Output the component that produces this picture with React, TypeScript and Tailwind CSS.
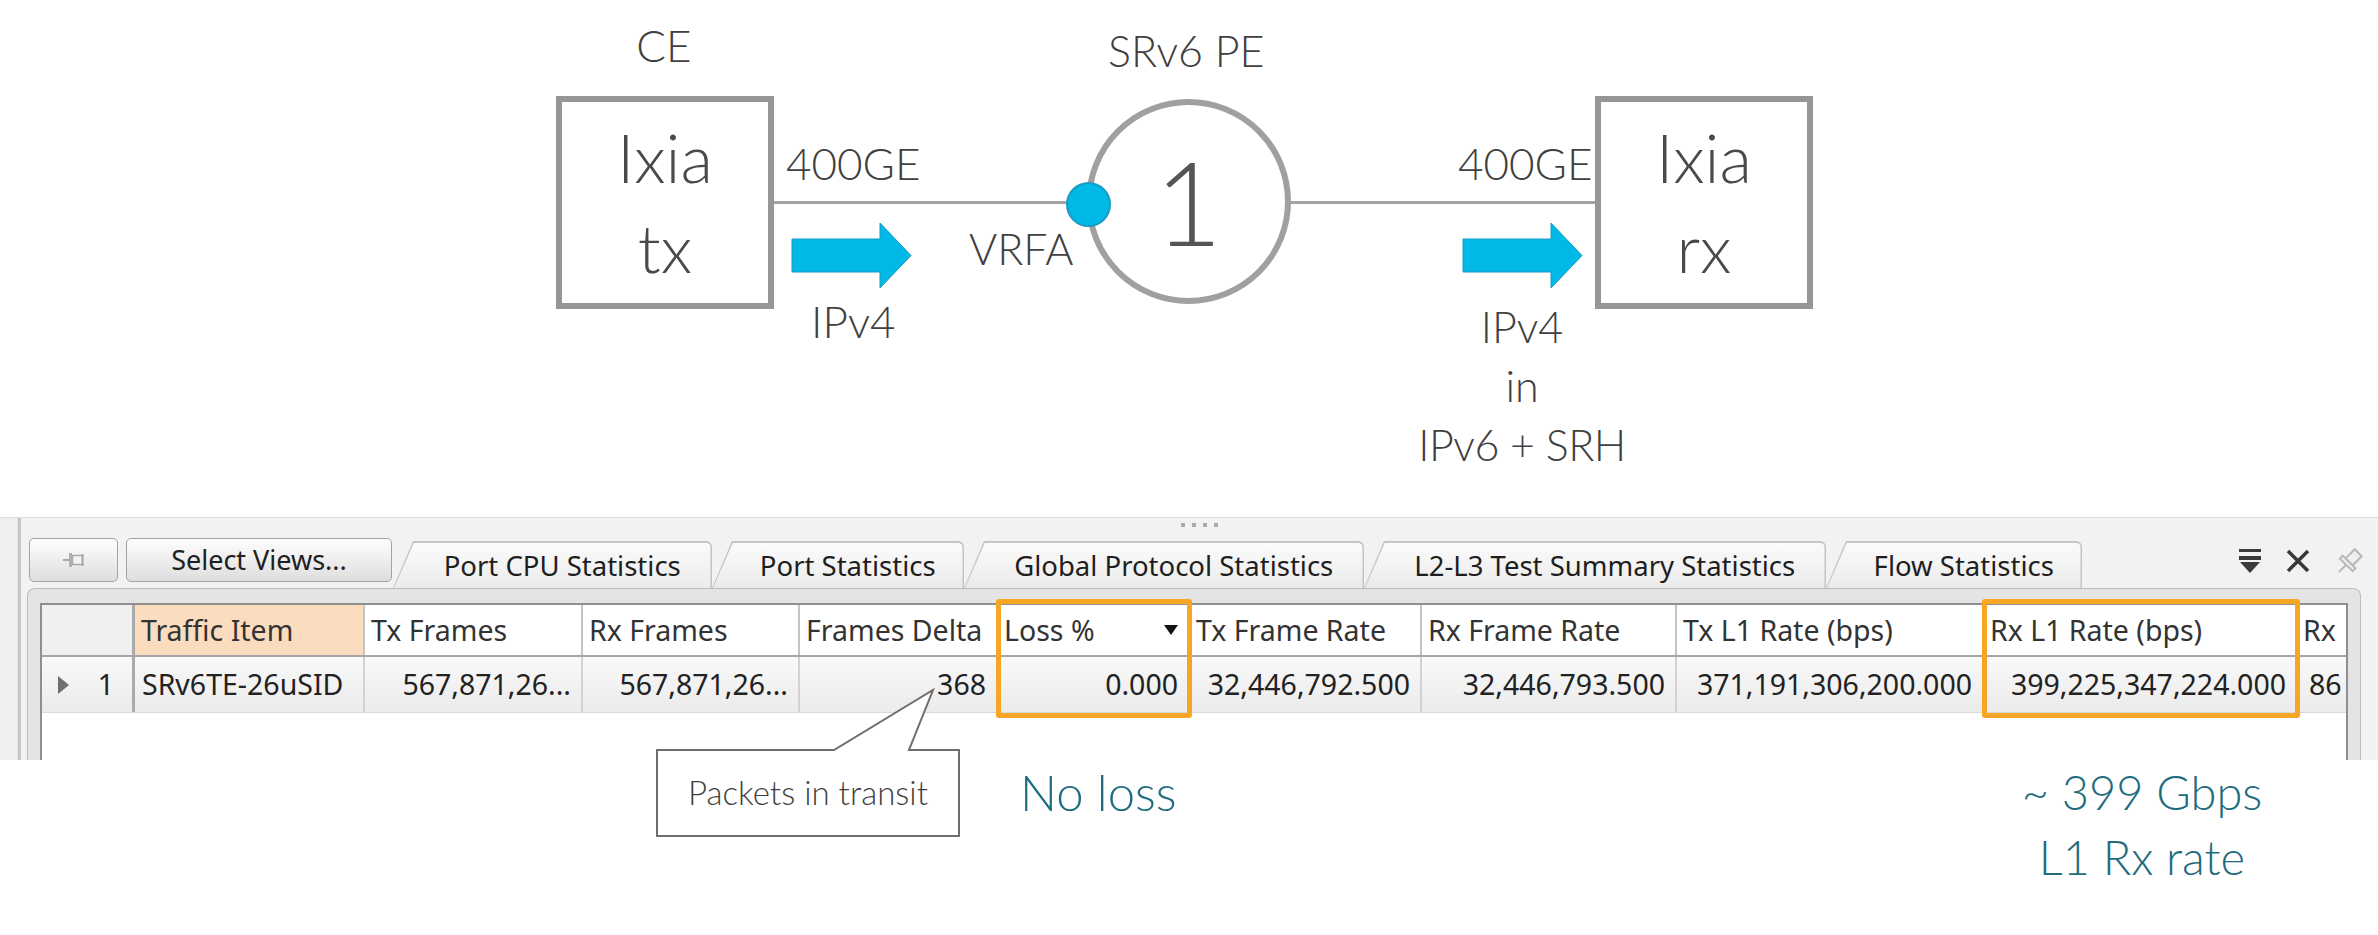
import React from "react";

const lato = "font-['Lato',sans-serif] font-light";
const ui = "font-['Noto_Sans',sans-serif]";

type Col = { label: string; value: string; w: string; left?: boolean; hl?: boolean; sort?: boolean };

const columns: Col[] = [
  { label: "Traffic Item", value: "SRv6TE-26uSID", w: "w-[230px]", left: true, hl: true },
  { label: "Tx Frames", value: "567,871,26...", w: "w-[218px]" },
  { label: "Rx Frames", value: "567,871,26...", w: "w-[217px]" },
  { label: "Frames Delta", value: "368", w: "w-[198px]" },
  { label: "Loss %", value: "0.000", w: "w-[192px]", sort: true },
  { label: "Tx Frame Rate", value: "32,446,792.500", w: "w-[232px]" },
  { label: "Rx Frame Rate", value: "32,446,793.500", w: "w-[255px]" },
  { label: "Tx L1 Rate (bps)", value: "371,191,306,200.000", w: "w-[307px]" },
  { label: "Rx L1 Rate (bps)", value: "399,225,347,224.000", w: "w-[314px]" },
];

const tabs = [
  { label: "Port CPU Statistics", w: "w-[319px]" },
  { label: "Port Statistics", w: "w-[252px]" },
  { label: "Global Protocol Statistics", w: "w-[400px]" },
  { label: "L2-L3 Test Summary Statistics", w: "w-[462px]" },
  { label: "Flow Statistics", w: "w-[256px]" },
];

function Arrow({ className }: { className: string }) {
  return (
    <svg className={className} width="121" height="67" viewBox="-1 -1 121 67">
      <polygon points="0,16 88,16 88,0 119,32.5 88,65 88,49 0,49" fill="#00b9e6" stroke="#1a9bc4" strokeWidth="1" />
    </svg>
  );
}

function Diagram() {
  const label = `absolute whitespace-nowrap leading-none text-[#404040] ${lato}`;
  return (
    <div className="relative h-[517px]">
      <div className={`${label} left-[614px] top-[23px] w-[100px] text-center text-[44px]`}>CE</div>
      <div className={`${label} left-[1108px] top-[29px] text-[43px]`}>SRv6 PE</div>

      <div className={`absolute left-[556px] top-[96px] flex h-[213px] w-[218px] flex-col items-center border-[6px] border-[#969696] pt-[10px] text-[67px] leading-[90px] text-[#4a4a4a] ${lato}`}>
        <span>Ixia</span>
        <span>tx</span>
      </div>
      <div className={`absolute left-[1595px] top-[96px] flex h-[213px] w-[218px] flex-col items-center border-[6px] border-[#969696] pt-[10px] text-[67px] leading-[90px] text-[#4a4a4a] ${lato}`}>
        <span>Ixia</span>
        <span>rx</span>
      </div>

      <div className="absolute left-[774px] top-[201px] h-[3px] w-[312px] bg-[#a3a3a3]" />
      <div className="absolute left-[1290px] top-[201px] h-[3px] w-[305px] bg-[#a3a3a3]" />

      <div className={`absolute left-[1086px] top-[99px] flex h-[205px] w-[205px] items-center justify-center rounded-full border-[6px] border-[#a0a0a0] text-[117px] leading-none text-[#555] ${lato}`}>
        1
      </div>
      <div className="absolute left-[1066px] top-[182px] h-[45px] w-[45px] rounded-full border-2 border-[#1a9bc4] bg-[#00b9e6]" />

      <div className={`${label} left-[786px] top-[141px] text-[44px]`}>400GE</div>
      <div className={`${label} left-[1458px] top-[141px] text-[44px]`}>400GE</div>
      <div className={`${label} left-[969px] top-[227px] text-[43px]`}>VRFA</div>
      <div className={`${label} left-[811px] top-[299px] text-[44px]`}>IPv4</div>
      <div className={`absolute left-[1422px] top-[297px] flex w-[200px] flex-col items-center whitespace-nowrap text-[43px] leading-[59px] text-[#404040] ${lato}`}>
        <span>IPv4</span>
        <span>in</span>
        <span className="tracking-[-0.5px]">IPv6 + SRH</span>
      </div>

      <Arrow className="absolute left-[791px] top-[222px]" />
      <Arrow className="absolute left-[1462px] top-[222px]" />
    </div>
  );
}

function Tab({ label, w }: { label: string; w: string }) {
  return (
    <div className={`${w} h-[47px] shrink-0 rounded-tr-[6px] bg-[#c4c4c4] pl-[1px] pr-[1.5px] pt-[1.5px] [clip-path:polygon(0_100%,20px_0,100%_0,100%_100%)]`}>
      <div className="flex h-full items-center justify-center rounded-tr-[5px] bg-linear-to-b from-[#fbfbfb] to-[#ebebeb] pl-[24px] pr-[4px] text-[27.5px] text-[#1e1e1e] [clip-path:polygon(0_100%,20px_0,100%_0,100%_100%)]">
        {label}
      </div>
    </div>
  );
}

function StatsPanel() {
  return (
    <section className={`flex h-[243px] border-t border-[#dcdcdc] ${ui}`}>
      <div className="w-[17px] bg-[#efefef]" />
      <div className="w-[1px] bg-[#e2e2e2]" />
      <div className="w-[3px] bg-[#c6c6c6]" />
      <div className="flex min-w-0 flex-1 flex-col bg-[#f2f2f2]">
        <div className="flex h-[20px] justify-center gap-[7px] pt-[5px]">
          <span className="h-[4px] w-[4px] bg-[#ababab]" />
          <span className="h-[4px] w-[4px] bg-[#ababab]" />
          <span className="h-[4px] w-[4px] bg-[#ababab]" />
          <span className="h-[4px] w-[4px] bg-[#ababab]" />
        </div>

        <div className="flex h-[50px]">
          <button className="ml-[8px] flex h-[44px] w-[89px] items-center justify-center self-start rounded-[5px] border border-[#a3a3a3] bg-linear-to-b from-[#fefefe] to-[#dedede]">
            <svg width="22" height="18" viewBox="0 0 22 18">
              <line x1="0" y1="9" x2="6" y2="9" stroke="#a8a8a8" strokeWidth="2" />
              <rect x="6" y="2" width="3" height="14" fill="#b0b0b0" />
              <rect x="9.5" y="4.5" width="10" height="9" fill="#f4f4f4" stroke="#a8a8a8" strokeWidth="1.5" />
              <line x1="19.5" y1="3" x2="19.5" y2="15" stroke="#a8a8a8" strokeWidth="2" />
            </svg>
          </button>
          <button className="ml-[8px] h-[44px] w-[266px] self-start rounded-[5px] border border-[#a3a3a3] bg-linear-to-b from-[#fefefe] to-[#dedede] text-[27px] text-[#202020]">
            Select Views...
          </button>
          <div className="ml-[1px] flex self-end">
            {tabs.map((t) => (
              <Tab key={t.label} label={t.label} w={t.w} />
            ))}
          </div>
          <div className="ml-auto mr-[14px] mt-[10px] flex items-start gap-[23px] self-start">
            <svg width="24" height="26" viewBox="0 0 24 26">
              <rect x="1" y="1" width="22" height="3" fill="#3a3a3a" />
              <rect x="1" y="8" width="22" height="4" fill="#3a3a3a" />
              <path d="M2 14 H22 L12 25 Z" fill="#3a3a3a" />
            </svg>
            <svg width="26" height="26" viewBox="0 0 26 26">
              <path d="M3 3 L23 23 M23 3 L3 23" stroke="#383838" strokeWidth="3.5" />
            </svg>
            <svg width="30" height="28" viewBox="0 0 30 28">
              <g transform="rotate(45 15 14)" fill="#efefef" stroke="#b8b8b8" strokeWidth="2">
                <rect x="10" y="1" width="10" height="13" />
                <rect x="6" y="14" width="18" height="4" />
                <line x1="15" y1="18" x2="15" y2="28" />
              </g>
            </svg>
          </div>
        </div>

        <div className="ml-[6px] mr-[17px] flex-1 rounded-t-[8px] border border-b-0 border-[#bcbcbc] bg-[#e4e4e4] pl-[12px] pr-[12px] pt-[14px]">
          <div className="h-full overflow-hidden border-x-2 border-t-2 border-[#8f8f8f] bg-white">
            <div className="flex h-[52px] border-b-2 border-[#a6a6a6] text-[28.5px] text-[#333]">
              <div className="w-[93px] shrink-0 border-r-[3px] border-[#ababab] bg-[#f0f0f0]" />
              {columns.map((c) => (
                <div
                  key={c.label}
                  className={`${c.w} flex shrink-0 items-center justify-between whitespace-nowrap border-r-2 border-[#c4c4c4] pl-[6px] pr-[10px] ${c.hl ? "bg-[#fcdcbf]" : "bg-white"}`}
                >
                  <span>{c.label}</span>
                  {c.sort && (
                    <svg width="14" height="10" viewBox="0 0 14 10">
                      <path d="M0 0 H14 L7 10 Z" fill="#111" />
                    </svg>
                  )}
                </div>
              ))}
              <div className="flex min-w-0 flex-1 items-center whitespace-nowrap pl-[5px]">Rx</div>
            </div>
            <div className="flex h-[56px] border-b border-[#d9d9d9] bg-linear-to-b from-[#f9f9f9] to-[#ebebeb] text-[28.5px] text-[#222]">
              <div className="flex w-[93px] shrink-0 items-center justify-between border-r-[3px] border-[#ababab] pl-[16px] pr-[18px]">
                <svg width="11" height="18" viewBox="0 0 11 18">
                  <path d="M0 0 L11 9 L0 18 Z" fill="#6f6f6f" />
                </svg>
                <span>1</span>
              </div>
              {columns.map((c) => (
                <div
                  key={c.label}
                  className={`${c.w} flex shrink-0 items-center whitespace-nowrap border-r-2 border-[#d2d2d2] ${c.left ? "justify-start pl-[7px]" : "justify-end pr-[10px]"}`}
                >
                  {c.value}
                </div>
              ))}
              <div className="flex min-w-0 flex-1 items-center whitespace-nowrap pl-[11px]">86</div>
            </div>
          </div>
        </div>
      </div>
    </section>
  );
}

export default function App() {
  return (
    <div className="relative h-[935px] w-[2378px] overflow-hidden bg-white">
      <Diagram />
      <StatsPanel />

      {/* highlight boxes over the grid */}
      <div className="absolute left-[996px] top-[599px] h-[119px] w-[196px] rounded-[3px] border-[5px] border-[#f6a623]" />
      <div className="absolute left-[1982px] top-[599px] h-[119px] w-[318px] rounded-[3px] border-[5px] border-[#f6a623]" />

      {/* callout */}
      <svg className="absolute left-[655px] top-[688px]" width="307" height="151" viewBox="0 0 307 151">
        <path d="M2 62 L179 62 L278 2 L254 62 L304 62 L304 148 L2 148 Z" fill="#fff" stroke="#6e6e6e" strokeWidth="2" />
      </svg>
      <div className={`absolute left-[657px] top-[750px] flex h-[86px] w-[302px] items-center justify-center text-[33px] text-[#404040] ${lato}`}>
        Packets in transit
      </div>

      <div className={`absolute left-[1020px] top-[768px] whitespace-nowrap text-[49px] leading-none text-[#1f6c7e] ${lato}`}>No loss</div>
      <div className={`absolute left-[2022px] top-[760px] flex w-[240px] flex-col items-center whitespace-nowrap text-[47px] leading-[65px] text-[#1f6c7e] ${lato}`}>
        <span>~ 399 Gbps</span>
        <span>L1 Rx rate</span>
      </div>
    </div>
  );
}
